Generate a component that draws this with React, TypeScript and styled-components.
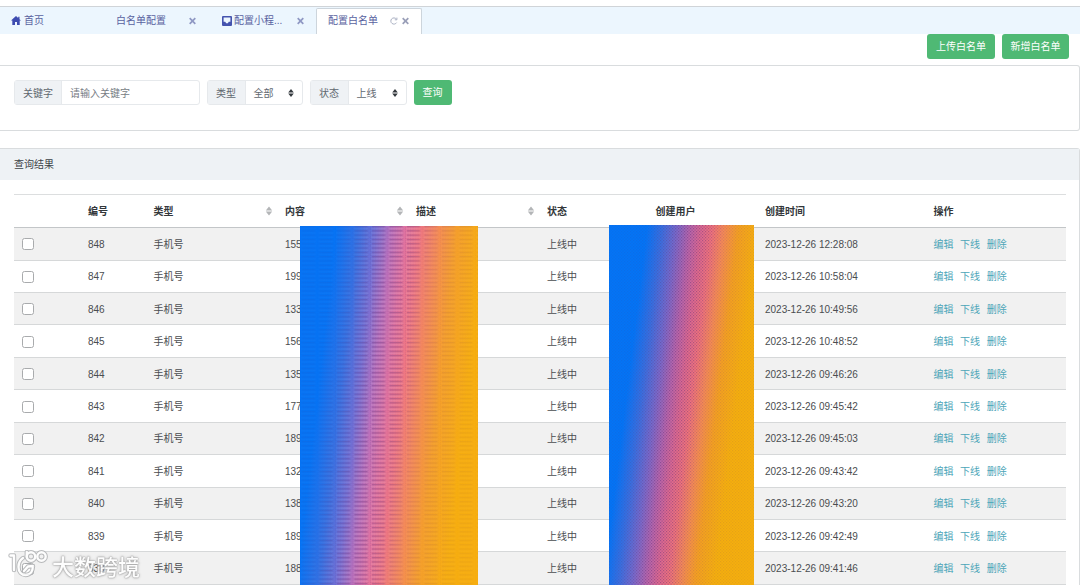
import React from 'react';
import styled, { createGlobalStyle, css } from 'styled-components';

const Global = createGlobalStyle`
  * { box-sizing: border-box; }
  html, body { margin: 0; height: 585px; overflow: hidden; background: #fff; }
  body {
    font-family: "Liberation Sans", "Noto Sans CJK SC", sans-serif;
    font-size: 10px;
    line-height: 15px;
    color: #4a4d50;
  }
`;

const Page = styled.div`
  position: relative;
  width: 1080px;
  height: 585px;
  overflow: hidden;
  background: #fff;
`;

const TabBar = styled.nav`
  display: flex;
  height: 28px;
  padding-top: 1px;
  margin-top: 6px;
  background: #ecf6fe;
  border-top: 1px solid #d0d4d8;
  color: #5962a0;
`;

const Tab = styled.div<{ $width: number; $left: number; $active?: boolean }>`
  display: flex;
  align-items: center;
  width: ${p => p.$width}px;
  padding: 0 12px 1px ${p => p.$left}px;
  ${p => p.$active && css`
    background: #fff;
    border: 1px solid #cdd5dc;
    border-bottom: 0;
    border-radius: 2px 2px 0 0;
    padding-bottom: 2px;
  `}
`;

const TabLabel = styled.span<{ $gap?: number }>`
  margin-left: ${p => p.$gap || 0}px;
  white-space: nowrap;
`;

const TabTools = styled.span`
  display: flex;
  align-items: center;
  gap: 4px;
  margin-left: auto;
`;

const Actions = styled.div`
  display: flex;
  justify-content: flex-end;
  gap: 7px;
  height: 31px;
  padding-right: 11px;
`;

const Button = styled.button<{ $width: number }>`
  width: ${p => p.$width}px;
  height: 25px;
  padding: 0;
  border: 0;
  border-radius: 3px;
  background: #4fb974;
  color: #fff;
  font: inherit;
`;

const Card = styled.section`
  border: 1px solid #d9dcde;
  border-left: 0;
  border-radius: 0 3px 3px 0;
`;

const FilterCard = styled(Card)`
  display: flex;
  align-items: flex-start;
  gap: 7px;
  height: 66px;
  padding: 14px 0 0 14px;
`;

const Field = styled.div<{ $width: number }>`
  display: flex;
  width: ${p => p.$width}px;
  height: 25px;
  border: 1px solid #e6e9ec;
  border-radius: 3px;
`;

const FieldLabel = styled.label<{ $width: number }>`
  flex: none;
  width: ${p => p.$width}px;
  background: #eff2f5;
  border-right: 1px solid #e6e9ec;
  text-align: center;
  padding-top: 1px;
  line-height: 23px;
  color: #5f6870;
`;

const FieldValue = styled.div<{ $muted?: boolean }>`
  display: flex;
  flex: 1;
  align-items: center;
  justify-content: space-between;
  padding: 1px 8px 0;
  color: ${p => (p.$muted ? '#777d84' : '#5f6870')};
`;

const ResultCard = styled(Card)`
  height: 500px;
  margin-top: 17px;
`;

const ResultTitle = styled.header`
  height: 31px;
  padding-left: 14px;
  line-height: 31px;
  background: #eef2f5;
  color: #3c4247;
`;

const Table = styled.div`
  width: 1052px;
  margin: 14px 0 0 14px;
  border-top: 1px solid #dcdedf;
`;

const Row = styled.div<{ $head?: boolean; $striped?: boolean }>`
  display: grid;
  grid-template-columns: 66px 65.5px 131.5px 131px 131px 108.5px 109.5px 168.5px 1fr;
  align-items: center;
  height: ${p => (p.$head ? 33.2 : 32.43)}px;
  padding-top: ${p => (p.$head ? 0 : 1)}px;
  border-bottom: 1px solid ${p => (p.$head ? '#c3c6c8' : '#d6d8d9')};
  background: ${p => (p.$striped ? '#f1f1f1' : '#fff')};
  ${p => p.$head && css`
    font-weight: bold;
    color: #33373a;
  `}
`;

const Cell = styled.div`
  display: flex;
  align-items: center;
  justify-content: space-between;
  padding: 0 4px 0 8px;
  white-space: nowrap;
`;

const Check = styled.span`
  width: 12px;
  height: 12px;
  border: 1px solid #a9abad;
  border-radius: 2.5px;
  background: #fff;
`;

const Links = styled(Cell)`
  justify-content: flex-start;
  gap: 6.6px;
  color: #4ba5b8;
`;

const Cover = styled.div<{ $x: number; $y: number; $w: number }>`
  position: absolute;
  left: ${p => p.$x}px;
  top: ${p => p.$y}px;
  width: ${p => p.$w}px;
  bottom: 0;
`;

const WideCover = styled(Cover)`
  background: linear-gradient(96.3deg, #0673f4 0, #0673f4 36px, #3570e2 58px, #746fd4 76px, #ba70bc 91px,
    #e072a0 105px, #ef7684 119px, #f48a58 137px, #f59f2c 156px, #f7ae10 184px, #f7ae10 100%);
`;

const NarrowCover = styled(Cover)`
  background: linear-gradient(97deg, #0474f5 0, #0474f5 38px, #386fe0 53px, #7a6acb 68px, #b966ac 81px,
    #dd6991 92px, #f0737c 103px, #f48a55 115px, #f4a022 129px, #f5af0e 148px, #f5af0e 100%);
`;

const Watermark = styled.div`
  position: absolute;
  left: 8px;
  top: 549px;
  display: flex;
  align-items: center;
  gap: 4px;
  height: 32px;
  color: #fff;
  opacity: .88;
`;

const WatermarkText = styled.span`
  font: 500 22px/32px "Noto Sans CJK SC", sans-serif;
  text-shadow: 0 0 1px #888, 0 0 2px #999, 0 0 3px #aaa;
`;

const Close = ({ color = '#8f98c4' }: { color?: string }) => (
  <svg width="7" height="8" viewBox="0 0 7 8">
    <path d="M.7 1.2 6.3 6.8M6.3 1.2.7 6.8" stroke={color} strokeWidth="1.7" />
  </svg>
);

const Refresh = () => (
  <svg width="8" height="8" viewBox="0 0 8 8">
    <path d="M6.6 5.6A3.1 3.1 0 1 1 6.3 2M6.9.6v2.2H4.8" fill="none" stroke="#a9afc2" />
  </svg>
);

const Home = () => (
  <svg width="10" height="9" viewBox="0 0 10 9">
    <path d="M5 0 0 4.6h1.3V9H4V6h2v3h2.7V4.6H10L8.5 3.2V.8H7.2V2z" fill="#3d4bb0" />
  </svg>
);

const Inbox = () => (
  <svg width="10" height="10" viewBox="0 0 10 10">
    <path fillRule="evenodd" d="M1 0h8a1 1 0 0 1 1 1v8a1 1 0 0 1-1 1H1a1 1 0 0 1-1-1V1a1 1 0 0 1 1-1zM1.6 1.6v4.2h1.6L4.2 7.2h1.6L6.8 5.8h1.6V1.6z" fill="#4453ae" />
  </svg>
);

const Carets = () => (
  <svg width="6" height="8" viewBox="0 0 6 8">
    <path d="M3 0 5.8 3.4H.2zM3 8 5.8 4.6H.2z" fill="#34393e" />
  </svg>
);

const Sort = () => (
  <svg width="8" height="10" viewBox="0 0 8 10">
    <path d="M4 .5 7.2 4.4H.8zM4 9.5 7.2 5.6H.8z" fill="#b3b5b7" />
  </svg>
);

const Weave = ({ id, wide }: { id: string; wide?: boolean }) => (
  <svg width="100%" height="100%" style={{ display: 'block' }}>
    <defs>
      <pattern id={id} width={wide ? 17.5 : 3} height={wide ? 4.3 : 3} patternUnits="userSpaceOnUse">
        {wide ? (
          <>
            <rect x="2" width="13" height="1.2" fill="#5a2a70" opacity=".75" />
            <rect x="1" y="2.1" width="15" height="1" fill="#fff" opacity=".4" />
            <path d="M0 1.6h17.5M0 3.7h17.5" stroke="#5a2a70" strokeWidth=".8" strokeDasharray="1 1.5" opacity=".5" />
          </>
        ) : (
          <>
            <rect width="1.2" height="1.2" fill="#5a2a70" />
            <rect x="1.5" y="1.5" width="1.2" height="1.2" fill="#5a2a70" />
          </>
        )}
      </pattern>
      <linearGradient id={id + 'fade'}>
        <stop offset="0" stopColor="#fff" stopOpacity="0.02" />
        <stop offset=".22" stopColor="#fff" stopOpacity=".08" />
        <stop offset=".42" stopColor="#fff" stopOpacity=".4" />
        <stop offset=".54" stopColor="#fff" stopOpacity=".38" />
        <stop offset=".64" stopColor="#fff" stopOpacity=".13" />
        <stop offset="1" stopColor="#fff" stopOpacity=".03" />
      </linearGradient>
      <mask id={id + 'mask'}>
        <rect width="100%" height="100%" fill="#fff" opacity=".03" />
        <g transform="skewX(-6)">
          <rect x={wide ? -2 : 0} width={wide ? 215 : 180} height="361" fill={`url(#${id}fade)`} />
        </g>
      </mask>
    </defs>
    <rect width="100%" height="100%" fill={`url(#${id})`} mask={`url(#${id}mask)`} />
  </svg>
);

const rows = [
  ['848', '155', '12:28:08'],
  ['847', '199', '10:58:04'],
  ['846', '133', '10:49:56'],
  ['845', '156', '10:48:52'],
  ['844', '135', '09:46:26'],
  ['843', '177', '09:45:42'],
  ['842', '189', '09:45:03'],
  ['841', '132', '09:43:42'],
  ['840', '138', '09:43:20'],
  ['839', '189', '09:42:49'],
  ['838', '188', '09:41:46'],
];

export default function App() {
  return (
    <Page>
      <Global />
      <TabBar>
        <Tab $width={104} $left={11}><Home /><TabLabel $gap={3}>首页</TabLabel></Tab>
        <Tab $width={104} $left={12}><TabLabel>白名单配置</TabLabel><TabTools><Close /></TabTools></Tab>
        <Tab $width={108} $left={14}><Inbox /><TabLabel $gap={2}>配置小程...</TabLabel><TabTools><Close /></TabTools></Tab>
        <Tab $width={106} $left={11} $active>
          <TabLabel>配置白名单</TabLabel>
          <TabTools><Refresh /><Close color="#9a9fb8" /></TabTools>
        </Tab>
      </TabBar>
      <Actions>
        <Button $width={68}>上传白名单</Button>
        <Button $width={67}>新增白名单</Button>
      </Actions>
      <FilterCard>
        <Field $width={185.5}>
          <FieldLabel $width={47}>关键字</FieldLabel>
          <FieldValue $muted>请输入关键字</FieldValue>
        </Field>
        <Field $width={96}>
          <FieldLabel $width={38}>类型</FieldLabel>
          <FieldValue>全部<Carets /></FieldValue>
        </Field>
        <Field $width={97}>
          <FieldLabel $width={38}>状态</FieldLabel>
          <FieldValue>上线<Carets /></FieldValue>
        </Field>
        <Button $width={38}>查询</Button>
      </FilterCard>
      <ResultCard>
        <ResultTitle>查询结果</ResultTitle>
        <Table>
          <Row $head>
            <Cell />
            <Cell>编号</Cell>
            <Cell>类型<Sort /></Cell>
            <Cell>内容<Sort /></Cell>
            <Cell>描述<Sort /></Cell>
            <Cell>状态</Cell>
            <Cell>创建用户</Cell>
            <Cell>创建时间</Cell>
            <Cell>操作</Cell>
          </Row>
          {rows.map(([id, content, time], i) => (
            <Row key={id} $striped={i % 2 === 0}>
              <Cell><Check /></Cell>
              <Cell>{id}</Cell>
              <Cell>手机号</Cell>
              <Cell>{content}</Cell>
              <Cell />
              <Cell>上线中</Cell>
              <Cell />
              <Cell>2023-12-26 {time}</Cell>
              <Links><span>编辑</span><span>下线</span><span>删除</span></Links>
            </Row>
          ))}
        </Table>
      </ResultCard>
      <WideCover $x={300} $y={226} $w={178}><Weave id="wide" wide /></WideCover>
      <NarrowCover $x={609} $y={225} $w={145}><Weave id="narrow" /></NarrowCover>
      <Watermark>
        <svg width="40" height="30" viewBox="0 0 40 30" fill="none" strokeLinecap="round" strokeLinejoin="round">
          {[['#b0b2b4', 4.4], ['#fff', 2.4]].map(([color, width]) => (
            <g key={color} stroke={color as string} strokeWidth={width as number}>
              <path d="M2.500 5.500H6V20" />
              <path d="M15 8c-3 2-4.500 5-4.500 9 0 5 3 8 7 8 5 0 7.500-4 7.500-9l-5 .5-4 4.500" />
              <path d="M18.800 2v5" />
              <circle cx="23" cy="6.500" r="4.200" />
              <circle cx="33.500" cy="6.500" r="4.200" />
            </g>
          ))}
        </svg>
        <WatermarkText>大数跨境</WatermarkText>
      </Watermark>
    </Page>
  );
}
